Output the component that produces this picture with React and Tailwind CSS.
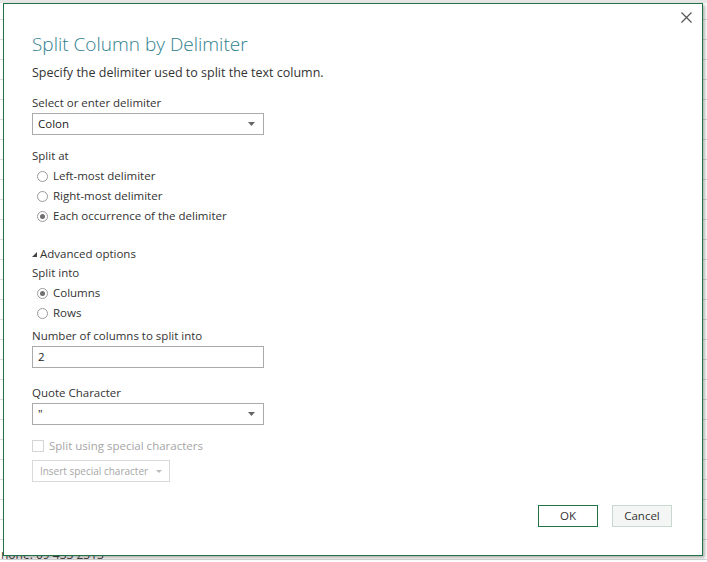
import React from 'react'

const font = { fontFamily: '"Open Sans", "Noto Sans", sans-serif' }

const Radio = ({ checked, label }) => (
  <label className="flex items-center gap-[5px] h-5 pl-[5px]">
    <span className="w-[11px] h-[11px] rounded-full border border-[#9a9a9a] bg-white flex items-center justify-center">
      {checked && <span className="w-[5px] h-[5px] rounded-full bg-[#707070]" />}
    </span>
    <span className="text-[11.5px] text-[#333]">{label}</span>
  </label>
)

const Select = ({ value }) => (
  <div className="w-[232px] h-[22px] border border-[#aaaaaa] bg-white flex items-center justify-between pl-[5px] pr-[8px]">
    <span className="text-[11.5px] text-[#222]">{value}</span>
    <svg width="7" height="4" viewBox="0 0 7 4">
      <path d="M0 0h7L3.5 4z" fill="#666" />
    </svg>
  </div>
)

const Label = ({ className, children }) => (
  <div className={`text-[11.5px] text-[#333] leading-[16px] ${className}`}>{children}</div>
)

const App = () => {
  return (
    <div className="relative w-[707px] h-[562px] overflow-hidden bg-white" style={font}>
      {/* spreadsheet behind the dialog */}
      <div className="absolute inset-0 bg-[repeating-linear-gradient(to_bottom,transparent_0px,transparent_19px,#d9d9d9_19px,#d9d9d9_20px)]" />
      <div className="absolute left-0 top-0 w-full h-[3px] bg-[#e6e6e6]" />
      <div className="absolute left-0 top-[548px] text-[12px] text-[#444] leading-[14px] pl-[1px]">
        none: 09 433 2313
      </div>

      {/* dialog */}
      <div className="absolute left-[3px] top-[3px] w-[700px] h-[553px] bg-white border border-[#217346] shadow-[2px_2px_3px_rgba(0,0,0,0.3)]">
        <button className="absolute right-[6px] top-[3px] w-5 h-5 flex items-center justify-center">
          <svg width="11" height="11" viewBox="0 0 11 11">
            <path d="M0.5 0.5l10 10M10.5 0.5l-10 10" stroke="#555" strokeWidth="1.2" />
          </svg>
        </button>

        <div className="pl-[28px] pt-[26px]">
          <h1 className="text-[19px] font-light text-[#2f7f8e] leading-[28px]">Split Column by Delimiter</h1>
          <p className="text-[12.5px] text-[#333] mt-[6px] leading-[18px]">
            Specify the delimiter used to split the text column.
          </p>

          <Label className="mt-[13px]">Select or enter delimiter</Label>
          <div className="mt-[2px]">
            <Select value="Colon" />
          </div>

          <Label className="mt-[13px]">Split at</Label>
          <div className="mt-[2px] flex flex-col">
            <Radio label="Left-most delimiter" />
            <Radio label="Right-most delimiter" />
            <Radio checked label="Each occurrence of the delimiter" />
          </div>

          <Label className="mt-[20px] flex items-center gap-[3px]">
            <svg width="5" height="5" viewBox="0 0 5 5">
              <path d="M5 0v5H0z" fill="#444" />
            </svg>
            Advanced options
          </Label>
          <Label className="mt-[3px]">Split into</Label>
          <div className="mt-[2px] flex flex-col">
            <Radio checked label="Columns" />
            <Radio label="Rows" />
          </div>

          <Label className="mt-[5px]">Number of columns to split into</Label>
          <div className="mt-[2px] w-[232px] h-[22px] border border-[#aaaaaa] flex items-center pl-[5px] text-[11.5px] text-[#222]">
            2
          </div>

          <Label className="mt-[17px]">Quote Character</Label>
          <div className="mt-[2px]">
            <Select value={'"'} />
          </div>

          <div className="mt-[13px] flex items-center gap-[5px] h-[16px]">
            <span className="w-[12px] h-[12px] border border-[#d4d4d4] bg-white" />
            <span className="text-[11.5px] text-[#a6a6a6]">Split using special characters</span>
          </div>
          <div className="mt-[6px] w-[138px] h-[22px] border border-[#d9d9d9] flex items-center justify-center gap-[8px] text-[10px] text-[#a6a6a6]">
            Insert special character
            <svg width="6" height="3" viewBox="0 0 6 3">
              <path d="M0 0h6L3 3z" fill="#bbb" />
            </svg>
          </div>
        </div>

        <div className="absolute right-[30px] bottom-[28px] flex gap-[14px]">
          <button className="w-[60px] h-[22px] border border-[#217346] bg-white text-[11.5px] text-[#333]">OK</button>
          <button className="w-[60px] h-[22px] border border-[#c8d8cf] bg-[#f4f6f5] text-[11.5px] text-[#333]">Cancel</button>
        </div>
      </div>
    </div>
  )
}

export default App
